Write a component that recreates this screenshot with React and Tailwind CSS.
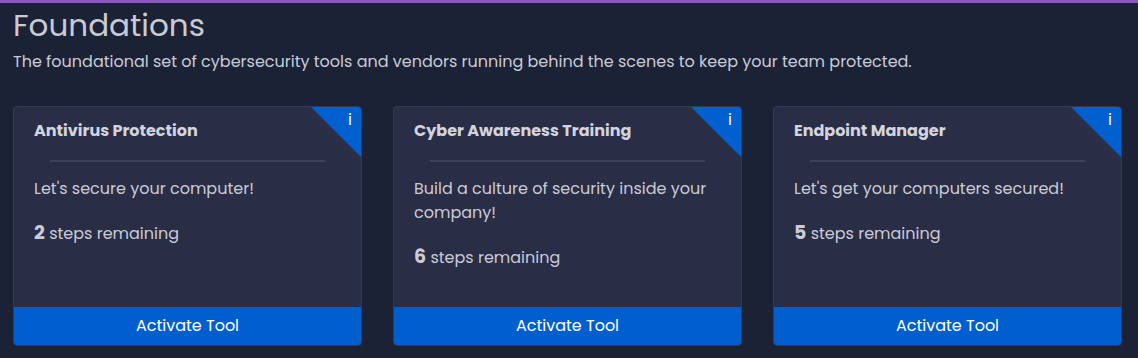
const tools = [
  { title: "Antivirus Protection", desc: "Let's secure your computer!", steps: 2 },
  { title: "Cyber Awareness Training", desc: "Build a culture of security inside your company!", steps: 6 },
  { title: "Endpoint Manager", desc: "Let's get your computers secured!", steps: 5 },
];

function ToolCard({ title, desc, steps }) {
  return (
    <div className="relative w-[349px] h-[240px] flex flex-col rounded-[4px] border border-[#343a52] bg-[#292d46] overflow-hidden">
      {/* corner info badge */}
      <div className="absolute top-0 right-0 w-[50px] h-[50px] bg-[#0060d0] [clip-path:polygon(0_0,100%_0,100%_100%)]" />
      <span className="absolute top-[5px] right-[9px] text-[16px] text-white leading-none">i</span>

      <div className="flex-1 px-[20px] pt-[13px]">
        <h3 className="text-[16px] font-bold text-[#d3d4de] leading-[22px]">{title}</h3>
        <div className="mx-[16px] mt-[18px] h-[2px] bg-[#3c4259]" />
        <p className="mt-[15px] text-[16px] leading-[24px] text-[#c9cbd6]">{desc}</p>
        <p className="mt-[20px] text-[16px] leading-[24px] text-[#c9cbd6]">
          <span className="text-[19px] font-bold">{steps}</span> steps remaining
        </p>
      </div>

      <button className="h-[38px] w-full bg-[#005ecf] text-white text-[16px]">
        Activate Tool
      </button>
    </div>
  );
}

export default function App() {
  return (
    <div className="min-h-[358px] bg-[#1b2236] font-['Poppins','Open_Sans',sans-serif]">
      <div className="h-[3px] bg-[#8a55c7]" />
      <div className="px-[13px]">
        <h1 className="pt-[3px] text-[31px] leading-[38px] text-[#c9cad3]">Foundations</h1>
        <p className="mt-[7px] text-[16px] leading-[22px] text-[#c9cbd6]">
          The foundational set of cybersecurity tools and vendors running behind the scenes to keep your team protected.
        </p>
        <div className="mt-[33px] flex gap-[31px]">
          {tools.map((t) => (
            <ToolCard key={t.title} {...t} />
          ))}
        </div>
      </div>
    </div>
  );
}
